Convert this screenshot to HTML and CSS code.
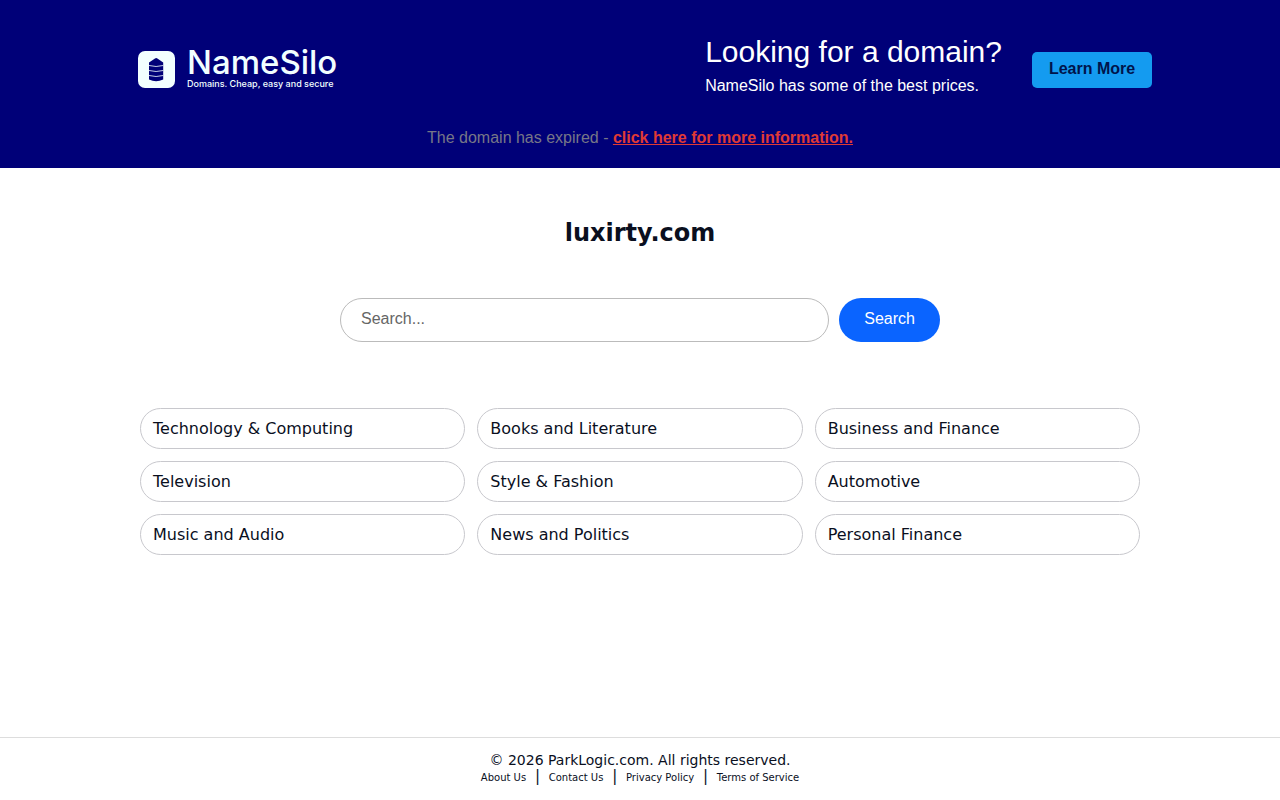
FILE: index.html
```
<!DOCTYPE html>
<html lang="en">
<head>
  <meta charset="utf-8">
  <meta name="viewport" content="width=device-width, initial-scale=1">
  <title>luxirty.com</title>
  <link rel="stylesheet" href="styles.css">
</head>
<body>
  <header class="banner">
    <div class="banner-row">
      <a class="logo" href="#">
        <svg class="logo-icon" viewBox="0 0 37 37" aria-hidden="true">
          <rect width="37" height="37" rx="7" fill="#f2ffff"/>
          <path d="M11 11.500 L17 7.500 Q18.200 6.700 19.400 7.500 L25.200 11.500 V28.500 Q18.100 31.900 11 28.500 Z" fill="#000078"/>
          <path d="M11 14.500 Q18.100 16.500 25.200 14.500 M11 19.500 Q18.100 21.500 25.200 19.500 M11 24.500 Q18.100 26.500 25.200 24.500" fill="none" stroke="#f2ffff" stroke-width="0.800"/>
        </svg>
        <span class="logo-text">
          <span class="logo-name">NameSilo</span>
          <span class="logo-tagline">Domains. Cheap, easy and secure</span>
        </span>
      </a>
      <div class="promo">
        <div class="promo-message">
          <div class="promo-title">Looking for a domain?</div>
          <div class="promo-text">NameSilo has some of the best prices.</div>
        </div>
        <a class="promo-button" href="#">Learn More</a>
      </div>
    </div>
    <p class="notice">The domain has expired - <a href="#">click here for more information.</a></p>
  </header>

  <main class="content">
    <h1>luxirty.com</h1>
    <form class="search">
      <input type="text" name="q" placeholder="Search..." aria-label="Search">
      <button type="submit">Search</button>
    </form>
    <nav class="topics">
      <a href="#">Technology &amp; Computing</a>
      <a href="#">Books and Literature</a>
      <a href="#">Business and Finance</a>
      <a href="#">Television</a>
      <a href="#">Style &amp; Fashion</a>
      <a href="#">Automotive</a>
      <a href="#">Music and Audio</a>
      <a href="#">News and Politics</a>
      <a href="#">Personal Finance</a>
    </nav>
  </main>

  <footer class="footer">
    <div class="copyright">© 2026 ParkLogic.com. All rights reserved.</div>
    <div class="footer-links">
      <a href="#">About Us</a> <span>|</span>
      <a href="#">Contact Us</a> <span>|</span>
      <a href="#">Privacy Policy</a> <span>|</span>
      <a href="#">Terms of Service</a>
    </div>
  </footer>
</body>
</html>
```

FILE: styles.css
```
* {
  box-sizing: border-box;
}
body {
  display: flex;
  flex-direction: column;
  min-height: 100vh;
  margin: 0;
  font-family: "DejaVu Sans", sans-serif;
  font-size: 16px;
  color: #0a0f1e;
  background-color: #fff;
}
a {
  color: inherit;
  text-decoration: none;
}

/* top banner */
.banner {
  padding: 32px 10% 20px;
  font-family: "Liberation Sans", Arial, sans-serif;
  color: #fff;
  background-color: #000078;
}
.banner-row {
  display: flex;
  justify-content: space-between;
  align-items: center;
  height: 76px;
}
.logo {
  display: flex;
  align-items: center;
  gap: 12px;
  padding: 0 0 1px 10px;
  color: #f2ffff;
}
.logo-icon {
  width: 37px;
  height: 37px;
}
.logo-text {
  display: flex;
  flex-direction: column;
  font-family: Inter, sans-serif;
  font-weight: 500;
}
.logo-name {
  font-size: 33px;
  line-height: 28px;
}
.logo-tagline {
  font-size: 9px;
  line-height: 16px;
}
.promo {
  display: flex;
  align-items: center;
  gap: 30px;
}
.promo-message {
  padding-bottom: 8px; /* lifts the message above the button's centre */
}
.promo-title {
  font-size: 30px;
  line-height: 40px;
}
.promo-text {
  line-height: 28px;
}
.promo-button {
  width: 120px;
  padding-bottom: 2px;
  border-radius: 5px;
  font-weight: bold;
  line-height: 34px;
  text-align: center;
  color: #00144b;
  background-color: #149bf0;
}
.notice {
  margin: 20px 0 0;
  line-height: 20px;
  text-align: center;
  color: #777787;
}
.notice a {
  font-weight: bold;
  text-decoration: underline;
  color: #e03a35;
}

/* main column */
.content {
  flex: 1;
  width: 100%;
  max-width: 1000px;
  margin: 0 auto;
}
h1 {
  margin: 50px 0;
  font-size: 24px;
  line-height: 30px;
  text-align: center;
}
.search {
  display: flex;
  gap: 10px;
  max-width: 600px;
  margin: 0 auto 66px;
}
.search input,
.search button {
  height: 44px;
  border-radius: 22px;
  font-family: "Liberation Sans", Arial, sans-serif;
  font-size: 16px;
}
.search input {
  flex: 1;
  min-width: 0;
  padding: 0 20px 2px;
  border: 1px solid #bbb;
}
.search input::placeholder {
  color: #666;
}
.search button {
  padding: 0 25px 2px;
  border: none;
  color: #fff;
  background-color: #0a64ff;
  cursor: pointer;
}
.topics {
  display: grid;
  grid-template-columns: repeat(3, 1fr);
  gap: 12px;
}
.topics a {
  padding: 10px 12px;
  border: 1px solid #c8c8cd;
  border-radius: 21px;
  line-height: 19px;
}

/* footer */
.footer {
  padding: 14px 0;
  border-top: 1px solid #ddd;
  text-align: center;
}
.copyright {
  font-size: 14px;
  line-height: 16px;
}
.footer-links {
  font-size: 15px;
  line-height: 16px;
}
.footer-links a {
  padding: 0 4px;
  font-size: 10px;
}
```
